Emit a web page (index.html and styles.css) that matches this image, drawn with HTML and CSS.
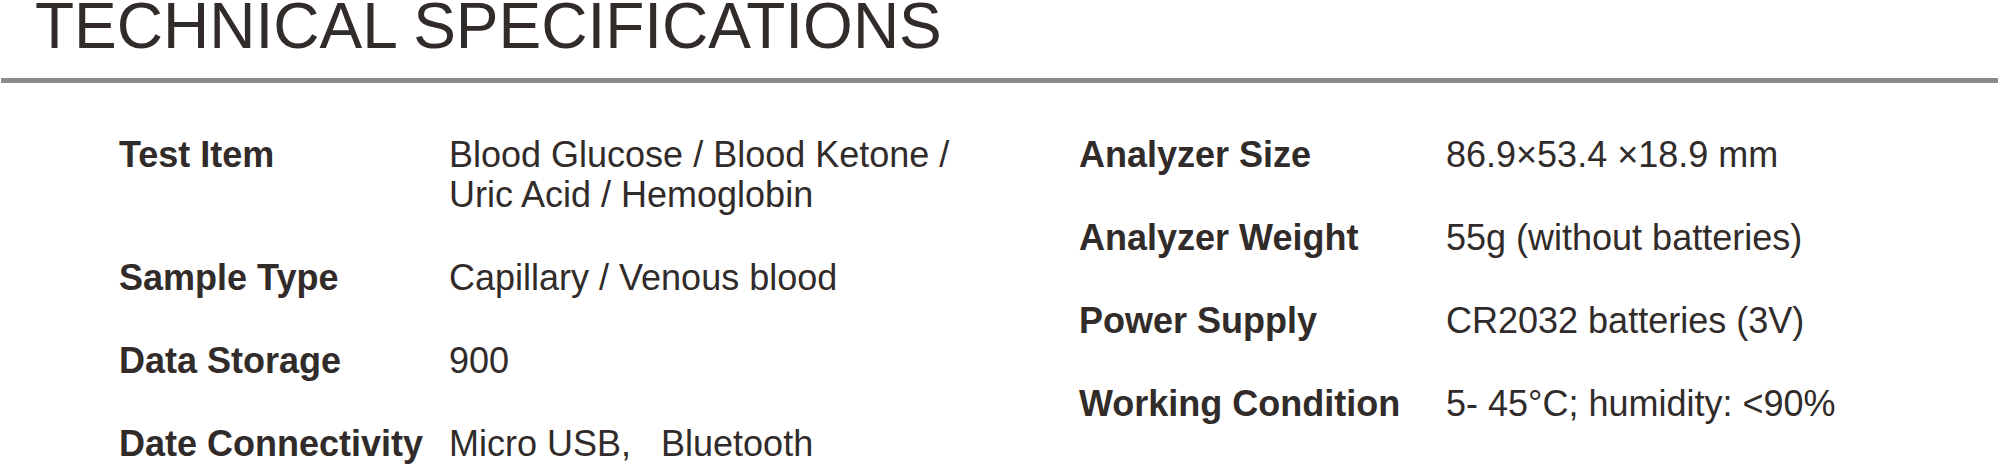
FILE: index.html
```html
<!DOCTYPE html>
<html lang="en">
<head>
<meta charset="utf-8">
<title>Technical Specifications</title>
<link rel="stylesheet" href="styles.css">
</head>
<body>
<section class="specs">
  <h1 class="specs-title">TECHNICAL SPECIFICATIONS</h1>
  <div class="specs-rule"></div>
  <div class="specs-body">
    <dl class="spec-group spec-group-left">
      <dt class="spec-label">Test Item</dt>
      <dd class="spec-value">Blood Glucose / Blood Ketone / Uric Acid / Hemoglobin</dd>
      <dt class="spec-label">Sample Type</dt>
      <dd class="spec-value">Capillary / Venous blood</dd>
      <dt class="spec-label">Data Storage</dt>
      <dd class="spec-value">900</dd>
      <dt class="spec-label">Date Connectivity</dt>
      <dd class="spec-value">Micro USB,&nbsp;&nbsp; Bluetooth</dd>
    </dl>
    <dl class="spec-group spec-group-right">
      <dt class="spec-label">Analyzer Size</dt>
      <dd class="spec-value">86.9×53.4 ×18.9 mm</dd>
      <dt class="spec-label">Analyzer Weight</dt>
      <dd class="spec-value">55g (without batteries)</dd>
      <dt class="spec-label">Power Supply</dt>
      <dd class="spec-value">CR2032 batteries (3V)</dd>
      <dt class="spec-label">Working Condition</dt>
      <dd class="spec-value">5- 45°C; humidity: &lt;90%</dd>
    </dl>
  </div>
</section>
</body>
</html>
```

FILE: styles.css
```css
html, body {
  margin: 0;
  padding: 0;
  background: #ffffff;
}

body {
  font-family: "Liberation Sans", Arial, sans-serif;
  color: #312b2a;
  width: 2000px;
  height: 466px;
  overflow: hidden;
}

.specs-title {
  margin: 0;
  padding-left: 35px;
  font-size: 64px;
  line-height: 52px;
  font-weight: 400;
  letter-spacing: 0;
}

.specs-rule {
  margin: 26px 2px 0 1px;
  height: 5px;
  background: #8c8c8c;
}

.specs-body {
  display: flex;
  padding-left: 119px;
  margin-top: 52px;
}

.spec-group {
  display: grid;
  margin: 0;
  row-gap: 43px;
  align-content: start;
  font-size: 36px;
  line-height: 40px;
}

.spec-group-left {
  width: 960px;
  grid-template-columns: 330px 540px;
}

.spec-group-right {
  grid-template-columns: 367px auto;
}

.spec-label {
  margin: 0;
  font-weight: 700;
  white-space: nowrap;
}

.spec-value {
  margin: 0;
  font-weight: 400;
}
```
